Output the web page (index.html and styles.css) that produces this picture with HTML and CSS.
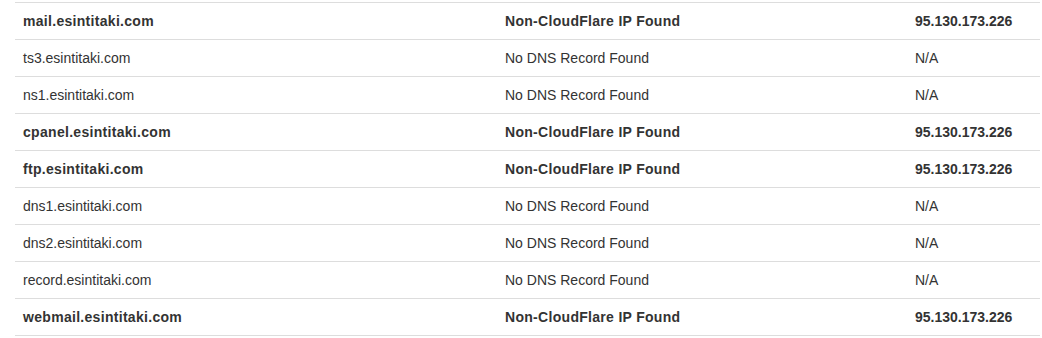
FILE: index.html
```html
<!DOCTYPE html>
<html lang="en">
<head>
  <meta charset="UTF-8" />
  <title>DNS Results</title>
  <link rel="stylesheet" href="styles.css">
</head>
<body>
  <div class="results">
    <table class="table">
      <colgroup>
        <col class="col-host">
        <col class="col-status">
        <col class="col-ip">
      </colgroup>
      <tbody>
        <tr class="found"><td>mail.esintitaki.com</td><td>Non-CloudFlare IP Found</td><td class="ip">95.130.173.226</td></tr>
        <tr><td>ts3.esintitaki.com</td><td>No DNS Record Found</td><td class="ip">N/A</td></tr>
        <tr><td>ns1.esintitaki.com</td><td>No DNS Record Found</td><td class="ip">N/A</td></tr>
        <tr class="found"><td>cpanel.esintitaki.com</td><td>Non-CloudFlare IP Found</td><td class="ip">95.130.173.226</td></tr>
        <tr class="found"><td>ftp.esintitaki.com</td><td>Non-CloudFlare IP Found</td><td class="ip">95.130.173.226</td></tr>
        <tr><td>dns1.esintitaki.com</td><td>No DNS Record Found</td><td class="ip">N/A</td></tr>
        <tr><td>dns2.esintitaki.com</td><td>No DNS Record Found</td><td class="ip">N/A</td></tr>
        <tr><td>record.esintitaki.com</td><td>No DNS Record Found</td><td class="ip">N/A</td></tr>
        <tr class="found"><td>webmail.esintitaki.com</td><td>Non-CloudFlare IP Found</td><td class="ip">95.130.173.226</td></tr>
      </tbody>
    </table>
  </div>
</body>
</html>
```

FILE: styles.css
```css
body {
  margin: 0;
  font-family: "Liberation Sans", Arial, sans-serif;
  font-size: 14px;
  line-height: 20px;
  color: #333;
  background: #fff;
}
.results {
  padding: 2px 0 0 15px;
}
.table {
  width: 1025px;
  border-collapse: collapse;
  border-spacing: 0;
  table-layout: fixed;
}
.col-host {
  width: 482px;
}
.col-status {
  width: 410px;
}
.col-ip {
  width: 133px;
}
.table td {
  padding: 8px;
  border-top: 1px solid #ddd;
  text-align: left;
  vertical-align: top;
  white-space: nowrap;
}
.table tbody {
  border-bottom: 1px solid #ddd;
}
.found td {
  font-weight: bold;
  letter-spacing: 0.3px;
}
.found .ip {
  letter-spacing: 0;
}
```
